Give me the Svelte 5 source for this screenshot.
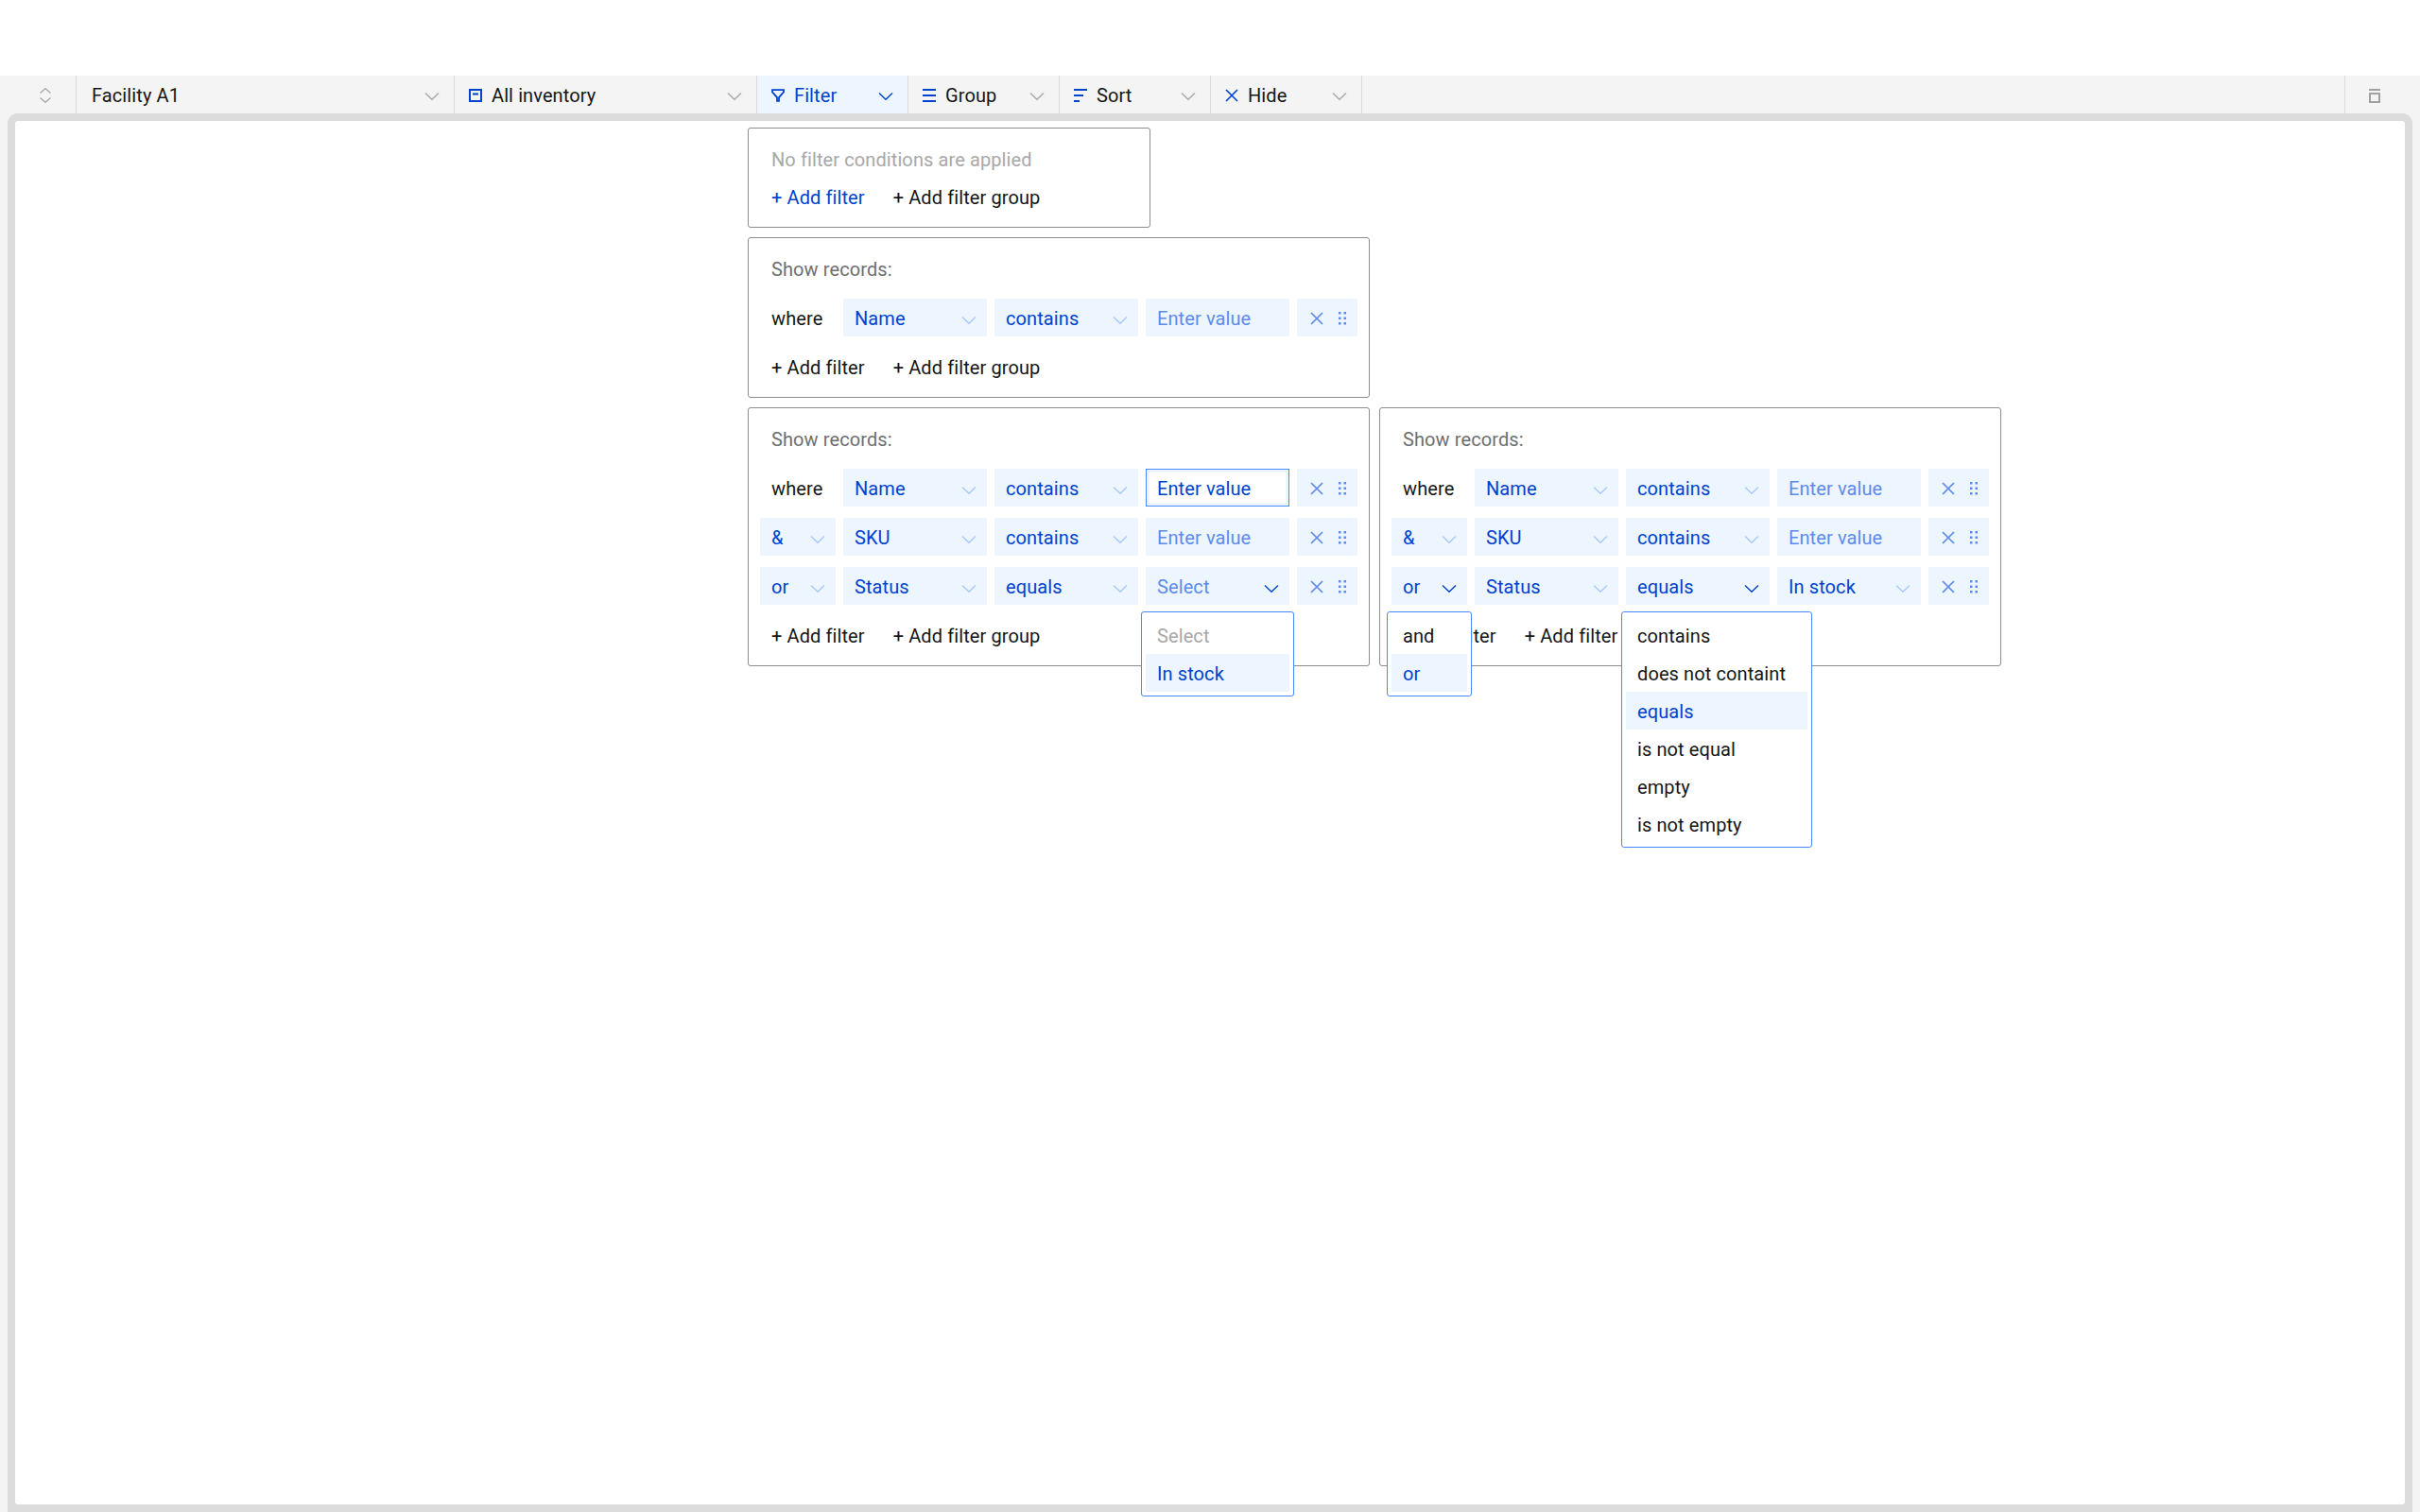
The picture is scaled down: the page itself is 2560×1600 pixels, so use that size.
<script>
  const tools = [
    { label: 'Filter', icon: 'filter', active: true },
    { label: 'Group', icon: 'group' },
    { label: 'Sort', icon: 'sort' },
    { label: 'Hide', icon: 'hide' }
  ];
</script>

{#snippet chevron(kind)}
  <svg class="chev {kind}" width="16" height="10" viewBox="0 0 16 10"><path d="M1 1.500 L8 8.200 L15 1.500" fill="none" stroke="currentColor" stroke-width="1.400" /></svg>
{/snippet}

{#snippet toolIcon(name)}
  <svg class="ticon" width="14" height="14" viewBox="0 0 14 14">
    {#if name === 'inventory'}
      <path d="M1 1h12v12H1z" fill="none" stroke="currentColor" stroke-width="2" />
      <path d="M4 4.500h6v2H4z" fill="currentColor" />
    {:else if name === 'filter'}
      <path d="M1 1.200H13V3.400L8 9.200V12.800H6V9.200L1 3.400Z" fill="none" stroke="currentColor" stroke-width="1.800" />
    {:else if name === 'group'}
      <path d="M0 0h14v2H0zM0 6h14v2H0zM0 12h14v2H0z" fill="currentColor" />
    {:else if name === 'sort'}
      <path d="M0 0h14v2H0zM0 6h10v2H0zM0 12h6v2H0z" fill="currentColor" />
    {:else}
      <path d="M1 1 L13 13 M13 1 L1 13" fill="none" stroke="currentColor" stroke-width="1.600" />
    {/if}
  </svg>
{/snippet}

{#snippet actions()}
  <div class="cell actions">
    <svg width="14" height="14" viewBox="0 0 14 14"><path d="M1 1 L13 13 M13 1 L1 13" fill="none" stroke="currentColor" stroke-width="1.700" /></svg>
    <svg width="8" height="14" viewBox="0 0 8 14"><path d="M0 0h2.500v2.500H0zM5.500 0h2.500v2.500H5.500zM0 5.500h2.500v2.500H0zM5.500 5.500h2.500v2.500H5.500zM0 11h2.500v2.500H0zM5.500 11h2.500v2.500H5.500z" fill="currentColor" /></svg>
  </div>
{/snippet}

{#snippet sel(text, cls = '', chev = 'light')}
  <div class="cell select {cls}"><span>{text}</span>{@render chevron(chev)}</div>
{/snippet}

{#snippet addRow(first = '')}
  <div class="add">
    <span class={first}>+ Add filter</span>
    <span>+ Add filter group</span>
  </div>
{/snippet}

<div class="page">
  <div class="toolbar">
    <div class="tool first">
      <svg width="12" height="16" viewBox="0 0 12 16"><path d="M0.500 5.500 L6 0.700 L11.500 5.500 M0.500 10.500 L6 15.300 L11.500 10.500" fill="none" stroke="currentColor" stroke-width="1.300" /></svg>
    </div>
    <div class="tool facility"><span class="tlabel">Facility A1</span>{@render chevron('grey')}</div>
    <div class="tool inventory">{@render toolIcon('inventory')}<span class="tlabel">All inventory</span>{@render chevron('grey')}</div>
    {#each tools as t}
      <div class="tool small" class:active={t.active}>
        {@render toolIcon(t.icon)}<span class="tlabel">{t.label}</span>{@render chevron(t.active ? 'dark' : 'grey')}
      </div>
    {/each}
    <div class="spacer"></div>
    <div class="tool end">
      <svg width="12" height="15" viewBox="0 0 12 15"><path d="M0 0h12v2H0z" fill="currentColor" /><path d="M1 5h10v9H1z" fill="none" stroke="currentColor" stroke-width="2" /></svg>
    </div>
  </div>

  <div class="frame">
    <div class="canvas">
      <div class="box narrow">
        <div class="text muted">No filter conditions are applied</div>
        {@render addRow('link')}
      </div>

      <div class="box">
        <div class="text label">Show records:</div>
        <div class="row">
          <div class="where">where</div>
          {@render sel('Name')}
          {@render sel('contains')}
          <div class="cell value">Enter value</div>
          {@render actions()}
        </div>
        {@render addRow()}
      </div>

      <div class="pair">
        <div class="box">
          <div class="text label">Show records:</div>
          <div class="row">
            <div class="where">where</div>
            {@render sel('Name')}
            {@render sel('contains')}
            <div class="cell value focus">Enter value</div>
            {@render actions()}
          </div>
          <div class="row">
            {@render sel('&', 'logic')}
            {@render sel('SKU')}
            {@render sel('contains')}
            <div class="cell value">Enter value</div>
            {@render actions()}
          </div>
          <div class="row">
            {@render sel('or', 'logic')}
            {@render sel('Status')}
            {@render sel('equals')}
            <div class="anchor">
              {@render sel('Select', 'placeholder', 'dark')}
              <div class="menu">
                <div class="opt disabled">Select</div>
                <div class="opt on">In stock</div>
              </div>
            </div>
            {@render actions()}
          </div>
          {@render addRow()}
        </div>

        <div class="box">
          <div class="text label">Show records:</div>
          <div class="row">
            <div class="where">where</div>
            {@render sel('Name')}
            {@render sel('contains')}
            <div class="cell value">Enter value</div>
            {@render actions()}
          </div>
          <div class="row">
            {@render sel('&', 'logic')}
            {@render sel('SKU')}
            {@render sel('contains')}
            <div class="cell value">Enter value</div>
            {@render actions()}
          </div>
          <div class="row">
            <div class="anchor">
              {@render sel('or', 'logic', 'dark')}
              <div class="menu">
                <div class="opt">and</div>
                <div class="opt on">or</div>
              </div>
            </div>
            {@render sel('Status')}
            <div class="anchor">
              {@render sel('equals', '', 'dark')}
              <div class="menu wide">
                <div class="opt">contains</div>
                <div class="opt">does not containt</div>
                <div class="opt on">equals</div>
                <div class="opt">is not equal</div>
                <div class="opt">empty</div>
                <div class="opt">is not empty</div>
              </div>
            </div>
            {@render sel('In stock')}
            {@render actions()}
          </div>
          {@render addRow()}
        </div>
      </div>
    </div>
  </div>
</div>

<style>
  :global(body) {
    margin: 0;
    background: #fff;
  }

  .page {
    height: 1600px;
    padding-top: 80px;
    box-sizing: border-box;
    display: flex;
    flex-direction: column;
    font-family: Roboto, "Noto Sans", sans-serif;
    font-size: 20px;
    letter-spacing: 0.1px;
    color: #161616;
    background: #f4f4f4;
    background-clip: content-box;
  }

  .toolbar {
    display: flex;
    height: 40px;
    background: #f4f4f4;
  }
  .tool {
    display: flex;
    align-items: center;
    box-sizing: border-box;
    border-right: 1px solid #dcdcdc;
    padding: 2px 15px 0;
    width: 160px;
    color: #0043ce;
  }
  .tool .tlabel {
    color: #161616;
    margin-left: 10px;
    flex: 1;
  }
  .tool.first {
    width: 81px;
    padding-left: 42px;
    color: #a8a8a8;
  }
  .facility {
    width: 400px;
  }
  .facility .tlabel {
    margin-left: 1px;
  }
  .inventory {
    width: 320px;
  }
  .active {
    background: #edf5ff;
  }
  .active .tlabel {
    color: #0043ce;
  }
  .spacer {
    flex: 1;
    border-right: 1px solid #dcdcdc;
  }
  .tool.end {
    width: 79px;
    border-right: 0;
    padding-left: 25px;
    color: #a0a0a0;
  }
  .chev {
    margin-top: 3px;
    flex: none;
  }
  .tool .chev {
    margin-top: 2px;
  }
  .chev.grey {
    color: #a8a8a8;
  }
  .chev.light {
    color: #a6c8ff;
  }
  .chev.dark {
    color: #0043ce;
  }

  .frame {
    flex: 1;
    margin: 0 8px;
    padding: 8px;
    background: #dcdcdc;
    border-radius: 10px 10px 0 0;
    display: flex;
  }
  .canvas {
    flex: 1;
    background: #fff;
    border-radius: 3px;
    padding: 7px 0 0 775px;
    display: flex;
    flex-direction: column;
    align-items: flex-start;
    gap: 10px;
  }
  .pair {
    display: flex;
    gap: 10px;
  }

  .box {
    width: 658px;
    box-sizing: border-box;
    border: 1px solid #8d8d8d;
    border-radius: 3px;
    padding: 12px;
    display: flex;
    flex-direction: column;
    gap: 12px;
  }
  .narrow {
    width: 426px;
    gap: 0;
  }
  .text,
  .add {
    box-sizing: border-box;
    height: 40px;
    padding: 3px 0 0 12px;
    line-height: 37px;
  }
  .muted {
    color: #a8a8a8;
  }
  .label {
    color: #6f6f6f;
  }
  .add {
    display: flex;
    gap: 30px;
  }
  .link {
    color: #0043ce;
  }

  .row {
    display: flex;
    gap: 8px;
    height: 40px;
  }
  .where {
    width: 68px;
    padding: 3px 0 0 12px;
    line-height: 37px;
    color: #161616;
  }
  .cell {
    box-sizing: border-box;
    height: 40px;
    padding-top: 2px;
    background: #edf5ff;
    color: #0043ce;
    display: flex;
    align-items: center;
  }
  .select {
    width: 152px;
    padding-left: 12px;
    padding-right: 11px;
    justify-content: space-between;
  }
  .logic {
    width: 80px;
  }
  .placeholder,
  .value {
    color: #5d8bec;
  }
  .value {
    width: 152px;
    padding-left: 12px;
  }
  .focus {
    color: #0043ce;
    background: #fff;
    border: 1px solid #4589ff;
    box-shadow: inset 0 0 0 3px #edf5ff;
    padding-left: 11px;
    padding-top: 1px;
  }
  .actions {
    width: 64px;
    padding-left: 14px;
    gap: 16px;
    color: #5d8bec;
  }

  .anchor {
    position: relative;
  }
  .menu {
    position: absolute;
    z-index: 2;
    top: 47px;
    left: -5px;
    right: -5px;
    background: #fff;
    border: 1px solid #4589ff;
    border-radius: 3px;
    padding: 4px;
  }
  .wide {
    right: -45px;
  }
  .opt {
    box-sizing: border-box;
    height: 40px;
    padding: 3px 0 0 12px;
    line-height: 37px;
    color: #161616;
  }
  .disabled {
    color: #a8a8a8;
  }
  .on {
    background: #edf5ff;
    color: #0043ce;
  }
</style>
